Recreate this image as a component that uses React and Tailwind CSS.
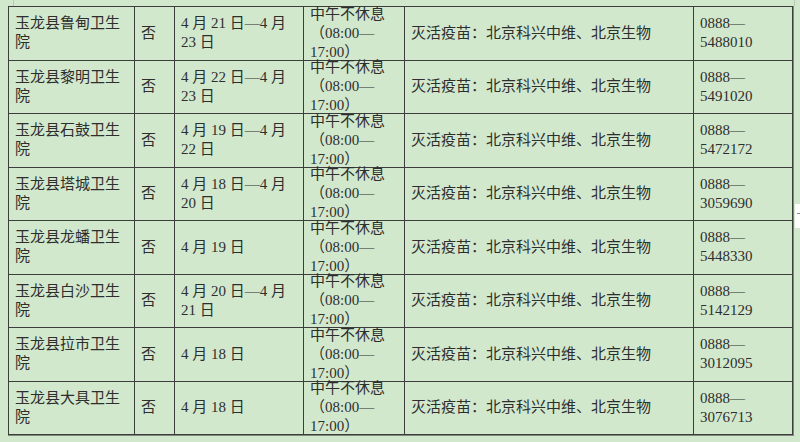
import React from 'react';

const rows = [
    { name: '鲁甸', date: ['4 月 21 日—4 月', '23 日'], tel: '5488010' },
    { name: '黎明', date: ['4 月 22 日—4 月', '23 日'], tel: '5491020' },
    { name: '石鼓', date: ['4 月 19 日—4 月', '22 日'], tel: '5472172' },
    { name: '塔城', date: ['4 月 18 日—4 月', '20 日'], tel: '3059690' },
    { name: '龙蟠', date: ['4 月 19 日'], tel: '5448330' },
    { name: '白沙', date: ['4 月 20 日—4 月', '21 日'], tel: '5142129' },
    { name: '拉市', date: ['4 月 18 日'], tel: '3012095' },
    { name: '大具', date: ['4 月 18 日'], tel: '3076713' },
];

const Cell = ({ children }) => (
    <div className="bg-[#d2e8cd] h-[52.5px] flex flex-col justify-center px-[6px] leading-[19px] whitespace-nowrap">
        {children}
    </div>
);

const App = () => {
    return (
        <div className="relative w-[800px] h-[442px] bg-[#d2e8cd] pl-[8px] pt-[6px] overflow-hidden font-['Liberation_Serif','Noto_Sans_CJK_SC',serif] text-[15px] text-[#2e2e2e]">
            <div className="absolute left-[13px] top-0 w-px h-[6px] bg-[#b7c9b3]"></div>
            <div className="absolute left-[794px] top-0 w-px h-[6px] bg-[#b7c9b3]"></div>

            <div className="grid grid-cols-[125px_39px_128px_100px_288px_98px] gap-px p-px bg-[#3d3d3d] w-fit border-r border-b border-[#7f887d]">
                {rows.map((r) => (
                    <React.Fragment key={r.tel}>
                        <Cell>
                            <span>玉龙县{r.name}卫生</span>
                            <span>院</span>
                        </Cell>
                        <Cell>否</Cell>
                        <Cell>
                            {r.date.map((d) => <span key={d}>{d}</span>)}
                        </Cell>
                        <Cell>
                            <span>中午不休息</span>
                            <span>（08:00—</span>
                            <span>17:00）</span>
                        </Cell>
                        <Cell>灭活疫苗：北京科兴中维、北京生物</Cell>
                        <Cell>
                            <span>0888—</span>
                            <span>{r.tel}</span>
                        </Cell>
                    </React.Fragment>
                ))}
            </div>

            <div className="absolute left-[795px] top-[204px] w-[5px] h-[24px] bg-white">
                <div className="mt-[9px] ml-[2px] w-[3px] h-px bg-[#8a8a8a]"></div>
            </div>
        </div>
    );
};

export default App;
